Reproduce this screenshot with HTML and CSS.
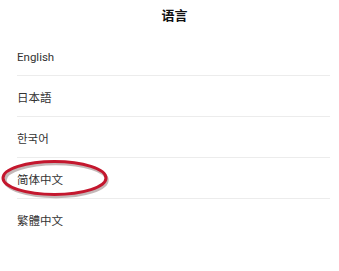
FILE: index.html
```html
<!doctype html>
<html lang="zh-CN">
<head>
    <meta charset="UTF-8">
    <meta name="viewport" content="width=device-width, initial-scale=1.0">
    <title>语言</title>
    <link rel="stylesheet" href="styles.css">
</head>
<body>
<div class="page">
    <div class="header">语言</div>

    <ul class="lang_list">
        <li class="lang_item">English</li>
        <li class="lang_item">日本語</li>
        <li class="lang_item">한국어</li>
        <li class="lang_item lang-marked">
            简体中文
            <svg class="mark" width="112" height="42" viewBox="0 0 112 42">
                <ellipse cx="55" cy="21" rx="51" ry="16.5" fill="none" stroke="rgba(60,20,20,0.3)" stroke-width="3.4"/>
                <ellipse cx="53.5" cy="19" rx="51.5" ry="16.5" fill="none" stroke="#c4172e" stroke-width="3"/>
            </svg>
        </li>
        <li class="lang_item">繁體中文</li>
    </ul>
</div>
</body>
</html>
```

FILE: styles.css
```css
body {
    margin: 0;
    padding: 0;
    background: #fff;
    font-family: Roboto, "Noto Sans CJK SC", sans-serif;
    color: #222;
}

.page {
    width: 339px;
    height: 271px;
    overflow: hidden;
}

.header {
    height: 35px;
    line-height: 32px;
    padding-left: 10px;
    text-align: center;
    font-size: 13px;
    font-weight: bold;
    color: #111;
}

.lang_list {
    list-style: none;
    margin: 0;
    padding: 0 9px 0 17px;
}

.lang_item {
    position: relative;
    height: 36px;
    padding-top: 4px;
    line-height: 36px;
    font-size: 11.5px;
    color: #333;
    border-bottom: 1px solid #ececec;
}

.lang_item:last-child {
    border-bottom: none;
}

.mark {
    position: absolute;
    left: -16px;
    top: 1px;
}
```
